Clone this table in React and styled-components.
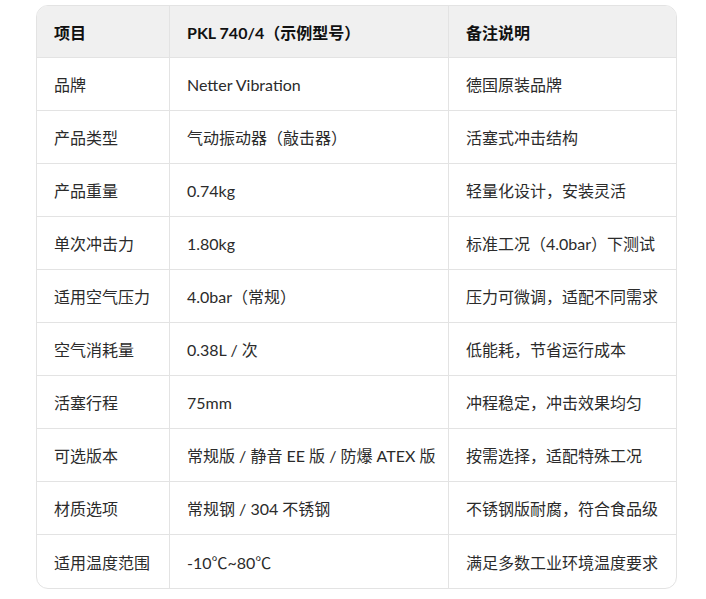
import React from "react";
import styled, { createGlobalStyle } from "styled-components";

const Global = createGlobalStyle`
  html, body { margin: 0; padding: 0; background: #fff; }
  body { font-family: "Noto Sans", "Noto Sans CJK SC", sans-serif; }
`;

const Page = styled.div`
  padding: 5px 29px 0 36px;
`;

const Table = styled.table`
  width: 641px;
  border-collapse: separate;
  border-spacing: 0;
  border: 1px solid #e3e3e3;
  border-radius: 12px;
  overflow: hidden;
  table-layout: fixed;
  font-family: "Lato", "Noto Sans CJK SC", sans-serif;
  font-size: 16px;
`;

const Th = styled.th`
  background: #f0f0f0;
  color: #111;
  font-weight: 700;
  text-align: left;
  height: 52px;
  padding: 0 17px;
  box-sizing: border-box;
  border-bottom: 1px solid #e3e3e3;
  border-right: ${(p) => (p.$last ? "none" : "1px solid #e3e3e3")};
`;

const Td = styled.td`
  color: #2b2b2b;
  height: 53px;
  padding: 0 17px;
  box-sizing: border-box;
  border-bottom: ${(p) => (p.$lastRow ? "none" : "1px solid #e3e3e3")};
  border-right: ${(p) => (p.$last ? "none" : "1px solid #e3e3e3")};
  white-space: nowrap;
`;

const headers = ["项目", "PKL 740/4（示例型号）", "备注说明"];
const rows = [
  ["品牌", "Netter Vibration", "德国原装品牌"],
  ["产品类型", "气动振动器（敲击器）", "活塞式冲击结构"],
  ["产品重量", "0.74kg", "轻量化设计，安装灵活"],
  ["单次冲击力", "1.80kg", "标准工况（4.0bar）下测试"],
  ["适用空气压力", "4.0bar（常规）", "压力可微调，适配不同需求"],
  ["空气消耗量", "0.38L / 次", "低能耗，节省运行成本"],
  ["活塞行程", "75mm", "冲程稳定，冲击效果均匀"],
  ["可选版本", "常规版 / 静音 EE 版 / 防爆 ATEX 版", "按需选择，适配特殊工况"],
  ["材质选项", "常规钢 / 304 不锈钢", "不锈钢版耐腐，符合食品级"],
  ["适用温度范围", "-10℃~80℃", "满足多数工业环境温度要求"],
];

export default function App() {
  return (
    <Page>
      <Global />
      <Table>
        <colgroup>
          <col style={{ width: 133 }} />
          <col style={{ width: 279 }} />
          <col />
        </colgroup>
        <thead>
          <tr>
            {headers.map((h, i) => (
              <Th key={i} $last={i === headers.length - 1}>{h}</Th>
            ))}
          </tr>
        </thead>
        <tbody>
          {rows.map((r, ri) => (
            <tr key={ri}>
              {r.map((c, ci) => (
                <Td key={ci} $last={ci === r.length - 1} $lastRow={ri === rows.length - 1}>{c}</Td>
              ))}
            </tr>
          ))}
        </tbody>
      </Table>
    </Page>
  );
}
